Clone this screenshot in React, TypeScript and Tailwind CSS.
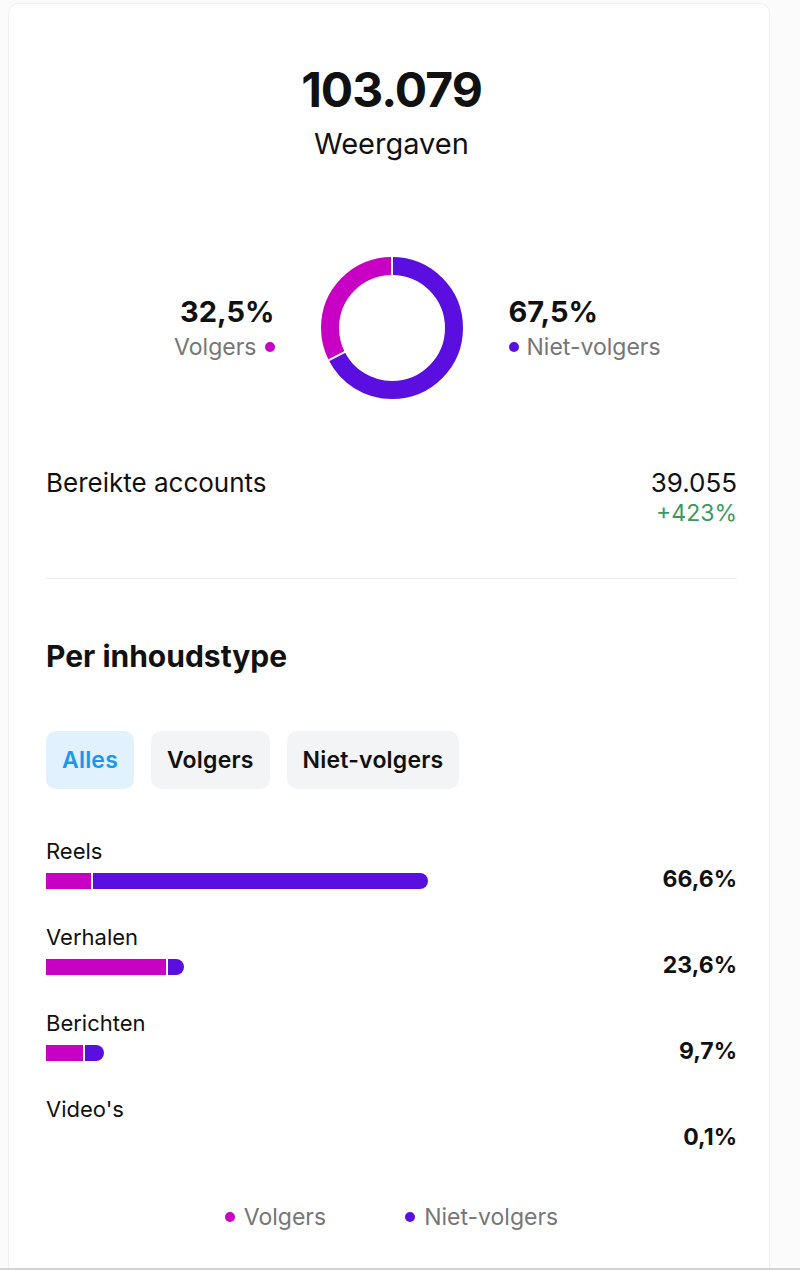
import React from 'react'

const MAGENTA = '#c800c3'
const PURPLE = '#5a0ee0'

interface ContentRow {
  label: string
  pct: string
  followers: number
  nonFollowers: number
}

const rows: ContentRow[] = [
  { label: 'Reels', pct: '66,6%', followers: 45, nonFollowers: 335 },
  { label: 'Verhalen', pct: '23,6%', followers: 120, nonFollowers: 16 },
  { label: 'Berichten', pct: '9,7%', followers: 37, nonFollowers: 19 },
  { label: "Video's", pct: '0,1%', followers: 0, nonFollowers: 0 },
]

function Donut() {
  const r = 62
  const c = 2 * Math.PI * r
  const purple = 0.675 * c
  const magenta = 0.325 * c
  // separator at 243deg clockwise from the top
  const a = (243 * Math.PI) / 180
  return (
    <svg width="142" height="142" viewBox="0 0 142 142">
      <g transform="rotate(-90 71 71)">
        <circle cx="71" cy="71" r={r} fill="none" stroke={PURPLE} strokeWidth="18" strokeDasharray={`${purple} ${c}`} />
        <circle
          cx="71"
          cy="71"
          r={r}
          fill="none"
          stroke={MAGENTA}
          strokeWidth="18"
          strokeDasharray={`${magenta} ${c}`}
          strokeDashoffset={-purple}
        />
      </g>
      <line x1="71" y1="0" x2="71" y2="20" stroke="white" strokeWidth="2" />
      <line
        x1={71 + 50 * Math.sin(a)}
        y1={71 - 50 * Math.cos(a)}
        x2={71 + 73 * Math.sin(a)}
        y2={71 - 73 * Math.cos(a)}
        stroke="white"
        strokeWidth="2"
      />
    </svg>
  )
}

function Dot({ color }: { color: string }) {
  return <span className="inline-block w-[10px] h-[10px] rounded-full" style={{ backgroundColor: color }} />
}

export default function App() {
  return (
    <div
      className="h-[1270px] flex flex-col bg-[#fbfbfb] text-[#111111]"
      style={{ fontFamily: 'Inter, "Noto Sans", sans-serif' }}
    >
      <div className="flex-1 flex pt-[3px] pl-[8px] pr-[30px]">
        <div className="flex-1 bg-white rounded-t-[10px] border-t border-x border-[#f1f1f1] pt-[58px] pl-[37px] pr-[32px]">
          {/* Headline */}
          <div className="flex flex-col items-center">
            <div className="text-[48px] leading-[56px] font-bold tracking-[-1px]">103.079</div>
            <div className="mt-[9px] text-[29px] leading-[34px]">Weergaven</div>
          </div>

          {/* Donut */}
          <div className="mt-[96px] grid grid-cols-[1fr_142px_1fr] gap-x-[46px] items-center">
            <div className="flex flex-col items-end">
              <div className="text-[29px] leading-[32px] font-bold">32,5%</div>
              <div className="mt-[5px] flex items-center gap-[8px] text-[23px] leading-[28px] text-[#767676]">
                Volgers <Dot color={MAGENTA} />
              </div>
            </div>
            <Donut />
            <div className="flex flex-col items-start">
              <div className="text-[29px] leading-[32px] font-bold">67,5%</div>
              <div className="mt-[5px] flex items-center gap-[8px] text-[23px] leading-[28px] text-[#767676]">
                <Dot color={PURPLE} /> Niet-volgers
              </div>
            </div>
          </div>

          {/* Reach */}
          <div className="mt-[69px] flex justify-between">
            <div className="text-[26px] leading-[30px]">Bereikte accounts</div>
            <div className="flex flex-col items-end">
              <div className="text-[26px] leading-[30px]">39.055</div>
              <div className="mt-[2px] text-[23px] leading-[26px] text-[#3a9a5f]">+423%</div>
            </div>
          </div>

          <div className="mt-[52px] h-px bg-[#efefef]" />

          {/* Per content type */}
          <div className="mt-[59px] text-[30px] leading-[36px] font-bold">Per inhoudstype</div>

          <div className="mt-[57px] flex gap-[17px]">
            <div className="h-[58px] px-[16px] flex items-center rounded-[10px] bg-[#e1f1fd] text-[#1a98ec] text-[23px] tracking-[0.2px] font-semibold">
              Alles
            </div>
            <div className="h-[58px] px-[16px] flex items-center rounded-[10px] bg-[#f3f4f5] text-[23px] tracking-[0.2px] font-semibold">
              Volgers
            </div>
            <div className="h-[58px] px-[16px] flex items-center rounded-[10px] bg-[#f3f4f5] text-[23px] tracking-[0.2px] font-semibold">
              Niet-volgers
            </div>
          </div>

          <div className="mt-[48px] flex flex-col gap-[28px]">
            {rows.map((row) => (
              <div key={row.label}>
                <div className="text-[22px] leading-[28px]">{row.label}</div>
                <div className="mt-[2px] h-[28px] flex items-center justify-between">
                  <div className="flex items-center gap-[2px] h-[16px]">
                    {row.followers > 0 && (
                      <div className="h-full" style={{ width: row.followers, backgroundColor: MAGENTA }} />
                    )}
                    {row.nonFollowers > 0 && (
                      <div className="h-full rounded-r-full" style={{ width: row.nonFollowers, backgroundColor: PURPLE }} />
                    )}
                  </div>
                  <div className="-translate-y-[2px] text-[23px] leading-[28px] font-bold">{row.pct}</div>
                </div>
              </div>
            ))}
          </div>

          {/* Legend */}
          <div className="mt-[50px] flex justify-center gap-[79px] text-[23px] leading-[28px] text-[#767676]">
            <div className="flex items-center gap-[9px]">
              <Dot color={MAGENTA} /> Volgers
            </div>
            <div className="flex items-center gap-[9px]">
              <Dot color={PURPLE} /> Niet-volgers
            </div>
          </div>
        </div>
      </div>
      <div className="h-[2px] bg-[#d4d4d4]" />
    </div>
  )
}
